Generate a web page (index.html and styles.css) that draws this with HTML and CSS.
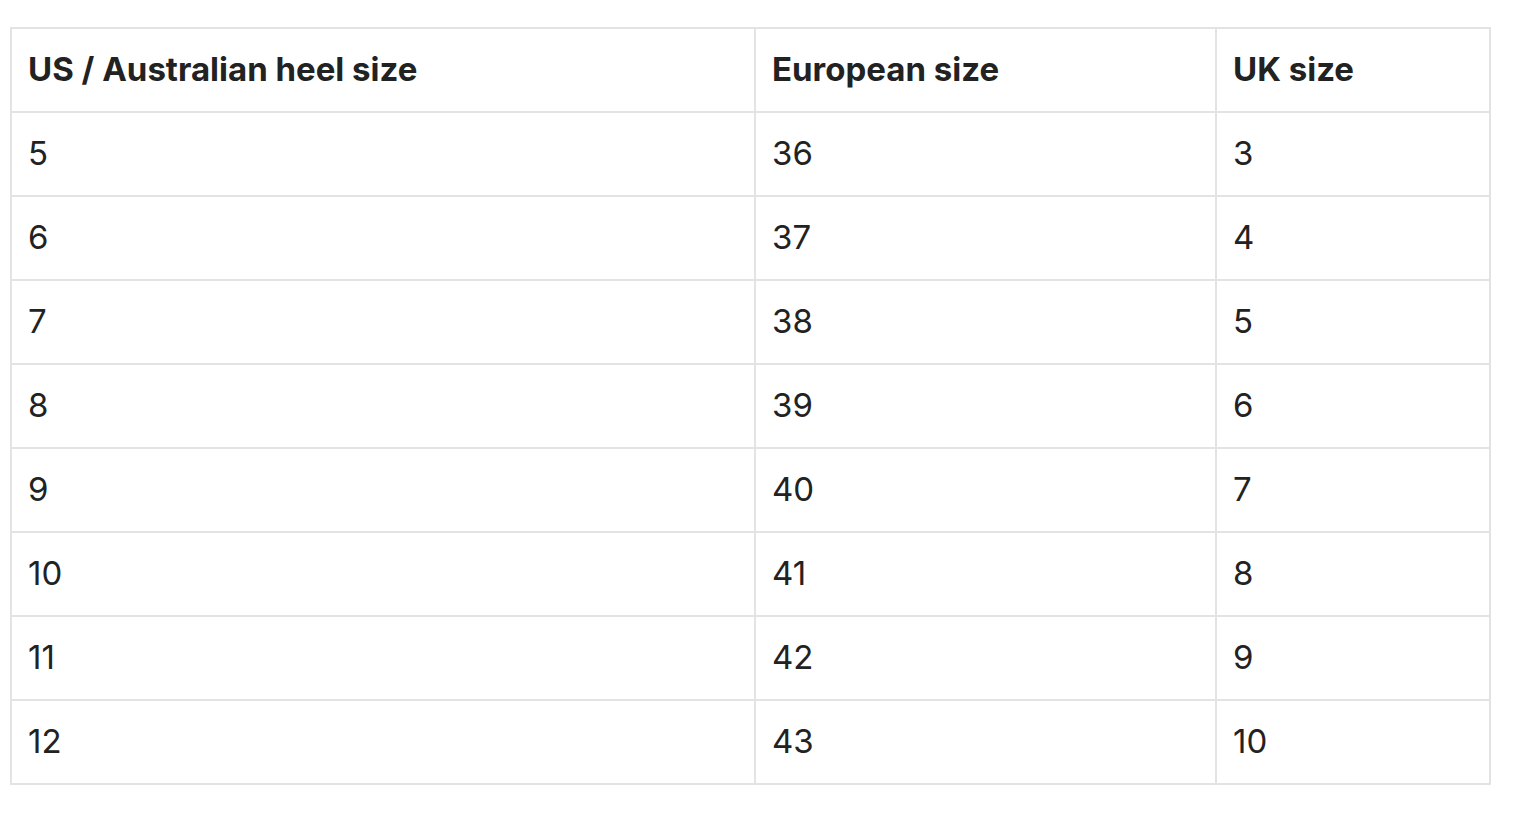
FILE: index.html
```html
<!DOCTYPE html>
<html>
<head>
<meta charset="utf-8">
<link rel="stylesheet" href="styles.css">
</head>
<body>
<table class="size-table">
  <colgroup>
    <col class="c1"><col class="c2"><col class="c3">
  </colgroup>
  <thead>
    <tr><th>US / Australian heel size</th><th>European size</th><th>UK size</th></tr>
  </thead>
  <tbody>
    <tr><td>5</td><td>36</td><td>3</td></tr>
    <tr><td>6</td><td>37</td><td>4</td></tr>
    <tr><td>7</td><td>38</td><td>5</td></tr>
    <tr><td>8</td><td>39</td><td>6</td></tr>
    <tr><td>9</td><td>40</td><td>7</td></tr>
    <tr><td>10</td><td>41</td><td>8</td></tr>
    <tr><td>11</td><td>42</td><td>9</td></tr>
    <tr><td>12</td><td>43</td><td>10</td></tr>
  </tbody>
</table>
</body>
</html>
```
FILE: styles.css
```css
html, body {
  margin: 0;
  padding: 0;
  background: #ffffff;
}
body {
  padding: 27px 0 0 10px;
  font-family: Inter, "Liberation Sans", sans-serif;
  color: #222222;
}
.size-table {
  border-collapse: collapse;
  width: 1479px;
  table-layout: fixed;
}
.c1 { width: 744px; }
.c2 { width: 461px; }
.c3 { width: 274px; }
.size-table th,
.size-table td {
  border: 2px solid #e3e3e3;
  height: 84px;
  padding: 0 16px 2px;
  text-align: left;
  vertical-align: middle;
  font-size: 33px;
  line-height: 40px;
  box-sizing: border-box;
}
.size-table th {
  font-weight: 700;
}
.size-table td {
  font-weight: 400;
}
```
